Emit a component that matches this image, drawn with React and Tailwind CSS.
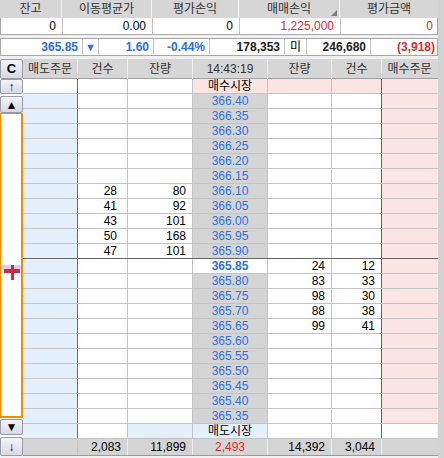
import React from "react";

const font = { fontFamily: '"Liberation Sans", "Noto Sans CJK KR", sans-serif' };

const asks = [
  ["366.40"], ["366.35"], ["366.30"], ["366.25"], ["366.20"], ["366.15"],
  ["366.10", "28", "80"], ["366.05", "41", "92"], ["366.00", "43", "101"],
  ["365.95", "50", "168"], ["365.90", "47", "101"],
];
const bids = [
  ["365.80", "83", "33"], ["365.75", "98", "30"], ["365.70", "88", "38"], ["365.65", "99", "41"],
  ["365.60"], ["365.55"], ["365.50"], ["365.45"], ["365.40"], ["365.35"],
];

const cols = "grid grid-cols-[55px_50px_65px_75px_64px_50px_55px]";

function Btn({ children, className = "" }) {
  return (
    <div className={"flex items-center justify-center rounded-[2px] border border-[#9a9aa8] bg-gradient-to-b from-[#f4f4f8] to-[#d8d8e4] text-[12px] font-bold text-black " + className}>
      {children}
    </div>
  );
}

function Row({ children, line = "border-[#c4c4c4]" }) {
  return <div className={cols + " h-[15px] border-b text-[12px] leading-[14px] " + line}>{children}</div>;
}

export default function App() {
  return (
    <div className="flex w-[444px] h-[458px] overflow-hidden bg-[#d2d2d2] text-black" style={font}>
      <div className="w-[438px] bg-[#f0f0f0]">
        {/* top summary */}
        <div className="bg-white">
          <div className="grid grid-cols-[62px_90px_87px_101px_98px] h-[18px] bg-[#d6d6d6] text-[12px] leading-[18px] text-[#333] text-center">
            <div className="border-r border-[#f4f4f4]">잔고</div>
            <div className="border-r border-[#f4f4f4]">이동평균가</div>
            <div className="border-r border-[#f4f4f4]">평가손익</div>
            <div className="relative border-r border-[#f4f4f4]">
              매매손익
              <svg className="absolute right-[2px] bottom-[2px]" width="6" height="6" viewBox="0 0 6 6">
                <polygon points="6,0 6,6 0,6" fill="#7a7a7a" />
              </svg>
            </div>
            <div>평가금액</div>
          </div>
          <div className="grid grid-cols-[62px_90px_87px_101px_98px] h-[17px] border border-t-0 border-[#a8a8a8] text-[12px] leading-[16px] text-right">
            <div className="border-r border-[#c4c4c4] pr-[6px]">0</div>
            <div className="border-r border-[#c4c4c4] pr-[6px]">0.00</div>
            <div className="border-r border-[#c4c4c4] pr-[6px]">0</div>
            <div className="border-r border-[#c4c4c4] pr-[6px] text-[#d42c2c]">1,225,000</div>
            <div className="pr-[6px] text-[#d42c2c]">0</div>
          </div>
        </div>

        <div className="mt-[3px] grid grid-cols-[82px_16px_55px_56px_75px_22px_64px_68px] h-[18px] border border-[#a8a8a8] bg-white text-[12px] leading-[16px] font-bold text-right">
          <div className="border-r border-[#c4c4c4] pr-[4px] text-[#2a6ee0]">365.85</div>
          <div className="border-r border-[#c4c4c4] text-center text-[11px] text-[#2a6ee0]">▼</div>
          <div className="border-r border-[#c4c4c4] pr-[4px] text-[#2a6ee0]">1.60</div>
          <div className="border-r border-[#c4c4c4] pr-[4px] text-[#2a6ee0]">-0.44%</div>
          <div className="border-r border-[#c4c4c4] pr-[4px] text-[#222]">178,353</div>
          <div className="border-r border-[#c4c4c4] text-center font-normal">미</div>
          <div className="border-r border-[#c4c4c4] pr-[4px] text-[#222]">246,680</div>
          <div className="pr-[4px] text-[#d42c2c]">(3,918)</div>
        </div>

        {/* main order book */}
        <div className="mt-[3px] flex">
          <div className="flex w-[23px] flex-col bg-white">
            <Btn className="h-[20px] text-[13px]">C</Btn>
            <Btn className="h-[15px] font-normal">↑</Btn>
            <Btn className="mt-[2px] h-[17px] text-[11px]">▲</Btn>
            <div className="relative h-[305px] border-2 border-t border-[#f28c00] border-l-[1px] bg-white">
              <div className="absolute left-0 right-0 top-[151px] h-[5px] bg-[#d8d0ee]" />
              <div className="absolute left-[10px] top-[151px] h-[15px] w-[3px] bg-[#d6283a]" />
              <div className="absolute left-[3px] top-[155px] h-[4px] w-[16px] bg-[#d6283a]" />
            </div>
            <Btn className="mt-[1px] h-[16px] text-[10px]">▼</Btn>
            <Btn className="mt-[2px] h-[19px] font-normal">↓</Btn>
          </div>

          <div className="w-[415px]">
            <div className={cols + " h-[20px] border-b border-[#a0a0a0] bg-[#d6d6d6] text-[12px] leading-[20px] text-[#333] text-center"}>
              <div className="border-r border-[#f0f0f0]">매도주문</div>
              <div className="border-r border-[#f0f0f0]">건수</div>
              <div className="border-r border-[#f0f0f0]">잔량</div>
              <div className="border-r border-[#f0f0f0]">14:43:19</div>
              <div className="border-r border-[#f0f0f0]">잔량</div>
              <div className="border-r border-[#f0f0f0]">건수</div>
              <div>매수주문</div>
            </div>

            <Row>
              <div className="bg-white border-r border-[#2e7be0]" />
              <div className="bg-white border-r border-[#c4c4c4]" />
              <div className="bg-white border-r border-[#c4c4c4]" />
              <div className="bg-[#fbe4e4] border-r border-[#c4c4c4] text-center">매수시장</div>
              <div className="bg-[#fbe4e4] border-r border-[#c4c4c4]" />
              <div className="bg-[#fbe4e4] border-r border-[#e03030]" />
              <div className="bg-[#fbe4e4]" />
            </Row>

            {asks.map((r, i) => (
              <Row key={r[0]} line={i === asks.length - 1 ? "border-[#666666]" : "border-[#c4c4c4]"}>
                <div className="bg-[#e3effb] border-r border-[#2e7be0]" />
                <div className="bg-white border-r border-[#c4c4c4] pr-[10px] text-right">{r[1]}</div>
                <div className="bg-white border-r border-[#c4c4c4] pr-[6px] text-right">{r[2]}</div>
                <div className="bg-[#d4d4d4] border-r border-[#c4c4c4] text-center text-[#2e72dc]">{r[0]}</div>
                <div className="bg-white border-r border-[#c4c4c4]" />
                <div className="bg-white border-r border-[#e03030]" />
                <div className="bg-[#fbe4e4]" />
              </Row>
            ))}

            <Row>
              <div className="bg-[#e3effb] border-r border-[#2e7be0]" />
              <div className="bg-white border-r border-[#c4c4c4]" />
              <div className="bg-white border-r border-[#c4c4c4]" />
              <div className="bg-white border-r border-[#c4c4c4] text-center font-bold text-[#2e72dc]">365.85</div>
              <div className="bg-white border-r border-[#c4c4c4] pr-[6px] text-right">24</div>
              <div className="bg-white border-r border-[#e03030] pr-[6px] text-right">12</div>
              <div className="bg-[#fbe4e4]" />
            </Row>

            {bids.map((r) => (
              <Row key={r[0]}>
                <div className="bg-[#e3effb] border-r border-[#2e7be0]" />
                <div className="bg-white border-r border-[#c4c4c4]" />
                <div className="bg-white border-r border-[#c4c4c4]" />
                <div className="bg-[#d4d4d4] border-r border-[#c4c4c4] text-center text-[#2e72dc]">{r[0]}</div>
                <div className="bg-white border-r border-[#c4c4c4] pr-[6px] text-right">{r[1]}</div>
                <div className="bg-white border-r border-[#e03030] pr-[6px] text-right">{r[2]}</div>
                <div className="bg-[#fbe4e4]" />
              </Row>
            ))}

            <Row>
              <div className="bg-[#e3effb] border-r border-[#2e7be0]" />
              <div className="bg-white border-r border-[#c4c4c4]" />
              <div className="bg-[#e3effb] border-r border-[#c4c4c4]" />
              <div className="bg-[#e3effb] border-r border-[#c4c4c4] text-center">매도시장</div>
              <div className="bg-white border-r border-[#c4c4c4]" />
              <div className="bg-white border-r border-[#e03030]" />
              <div className="bg-white" />
            </Row>

            <div className={cols + " h-[17px] border-b border-[#9a9a9a] bg-[#d4d4d4] text-[12px] leading-[16px] text-right"}>
              <div className="border-r border-[#c4c4c4]" />
              <div className="border-r border-[#ececec] pr-[6px]">2,083</div>
              <div className="border-r border-[#ececec] pr-[6px]">11,899</div>
              <div className="border-r border-[#ececec] text-center text-[#e02828]">2,493</div>
              <div className="border-r border-[#ececec] pr-[6px]">14,392</div>
              <div className="border-r border-[#ececec] pr-[6px]">3,044</div>
              <div />
            </div>
          </div>
        </div>
      </div>
    </div>
  );
}
